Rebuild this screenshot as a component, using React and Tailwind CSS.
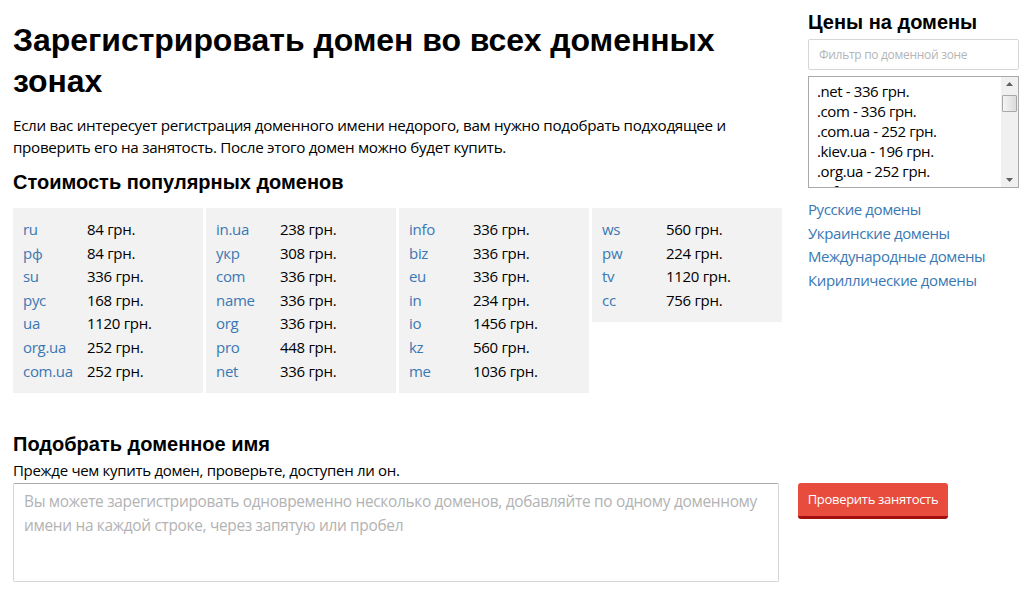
import React from "react";

const body = { fontFamily: '"Open Sans", "Noto Sans", sans-serif' };
const head = { fontFamily: '"Liberation Sans", Arial, sans-serif' };

const boxes = [
  [["ru", "84 грн."], ["рф", "84 грн."], ["su", "336 грн."], ["рус", "168 грн."], ["ua", "1120 грн."], ["org.ua", "252 грн."], ["com.ua", "252 грн."]],
  [["in.ua", "238 грн."], ["укр", "308 грн."], ["com", "336 грн."], ["name", "336 грн."], ["org", "336 грн."], ["pro", "448 грн."], ["net", "336 грн."]],
  [["info", "336 грн."], ["biz", "336 грн."], ["eu", "336 грн."], ["in", "234 грн."], ["io", "1456 грн."], ["kz", "560 грн."], ["me", "1036 грн."]],
  [["ws", "560 грн."], ["pw", "224 грн."], ["tv", "1120 грн."], ["cc", "756 грн."]],
];

const listItems = [".net - 336 грн.", ".com - 336 грн.", ".com.ua - 252 грн.", ".kiev.ua - 196 грн.", ".org.ua - 252 грн.", ".info - 336 грн."];

export default function App() {
  return (
    <div className="flex flex-col w-[1036px] h-[596px] bg-white text-black overflow-hidden" style={body}>
      <div className="flex">
        <div className="w-[770px] ml-[13px] flex flex-col">
          <h1 className="text-[32px] leading-[41px] font-bold mt-[20px] tracking-[-0.05px]" style={head}>
            Зарегистрировать домен во всех доменных зонах
          </h1>
          <p className="text-[15.2px] leading-[22px] mt-[12px] tracking-[-0.3px] pr-[40px]">
            Если вас интересует регистрация доменного имени недорого, вам нужно подобрать подходящее и проверить его на занятость. После этого домен можно будет купить.
          </p>
          <h2 className="text-[20px] leading-[24px] font-bold mt-[12px]" style={head}>
            Стоимость популярных доменов
          </h2>
          <div className="flex gap-[3px] items-start mt-[14px]">
            {boxes.map((b, i) => (
              <div key={i} className="w-[190px] bg-[#f2f2f2] px-[10px] py-[10px]">
                {b.map(([d, p]) => (
                  <div key={d} className="flex text-[15px] leading-[23.6px] tracking-[-0.3px]">
                    <span className="w-[64px] text-[#3a78b4]">{d}</span>
                    <span>{p}</span>
                  </div>
                ))}
              </div>
            ))}
          </div>
        </div>
        <div className="ml-[25px] w-[211px] flex flex-col">
          <h3 className="text-[20px] leading-[24px] font-bold mt-[10px]" style={head}>
            Цены на домены
          </h3>
          <div className="mt-[5px] h-[31px] border border-[#d6d6d6] rounded-[2px] px-[10px] flex items-center text-[12px] text-[#b5b5b5] tracking-[-0.3px]">
            Фильтр по доменной зоне
          </div>
          <div className="mt-[6px] h-[112px] border border-[#aaaaaa] flex overflow-hidden">
            <div className="flex-1 pl-[8px] pt-[4px] overflow-hidden">
              {listItems.map((t) => (
                <div key={t} className="text-[15px] leading-[20px] tracking-[-0.4px] whitespace-nowrap">{t}</div>
              ))}
            </div>
            <div className="w-[17px] bg-[#f0f0f0] flex flex-col items-center">
              <div className="h-[14px] flex items-center justify-center">
                <svg width="7" height="4" viewBox="0 0 7 4"><path d="M0 4 L3.5 0 L7 4 Z" fill="#606060" /></svg>
              </div>
              <div className="w-[15px] h-[17px] mt-[4px] border border-[#a8a8a8] rounded-[1px] bg-gradient-to-r from-[#f4f4f4] to-[#dcdcdc]" />
              <div className="flex-1" />
              <div className="h-[14px] flex items-center justify-center">
                <svg width="7" height="4" viewBox="0 0 7 4"><path d="M0 0 L7 0 L3.5 4 Z" fill="#606060" /></svg>
              </div>
            </div>
          </div>
          <div className="mt-[10px] flex flex-col text-[15px] leading-[23.5px] text-[#3a78b4] tracking-[-0.4px]">
            <span>Русские домены</span>
            <span>Украинские домены</span>
            <span>Международные домены</span>
            <span>Кириллические домены</span>
          </div>
        </div>
      </div>
      <div className="ml-[13px] flex flex-col">
        <h2 className="text-[20px] leading-[24px] font-bold mt-[39px]" style={head}>
          Подобрать доменное имя
        </h2>
        <div className="text-[15px] leading-[20px] mt-[4px] tracking-[-0.3px]">
          Прежде чем купить домен, проверьте, доступен ли он.
        </div>
        <div className="flex items-start gap-[19px] mt-[3px]">
          <div className="w-[766px] h-[99px] border border-[#d6d6d6] border-t-[#a9a9a9] rounded-[2px] px-[10px] py-[6px] text-[15.4px] leading-[24px] text-[#b3b3b3] tracking-[-0.3px]">
            Вы можете зарегистрировать одновременно несколько доменов, добавляйте по одному доменному имени на каждой строке, через запятую или пробел
          </div>
          <button className="w-[150px] h-[36px] bg-[#e74c3c] border-b-[3px] border-[#a50e0e] rounded-[3px] text-white text-[13px] tracking-[-0.3px] whitespace-nowrap">
            Проверить занятость
          </button>
        </div>
      </div>
    </div>
  );
}
